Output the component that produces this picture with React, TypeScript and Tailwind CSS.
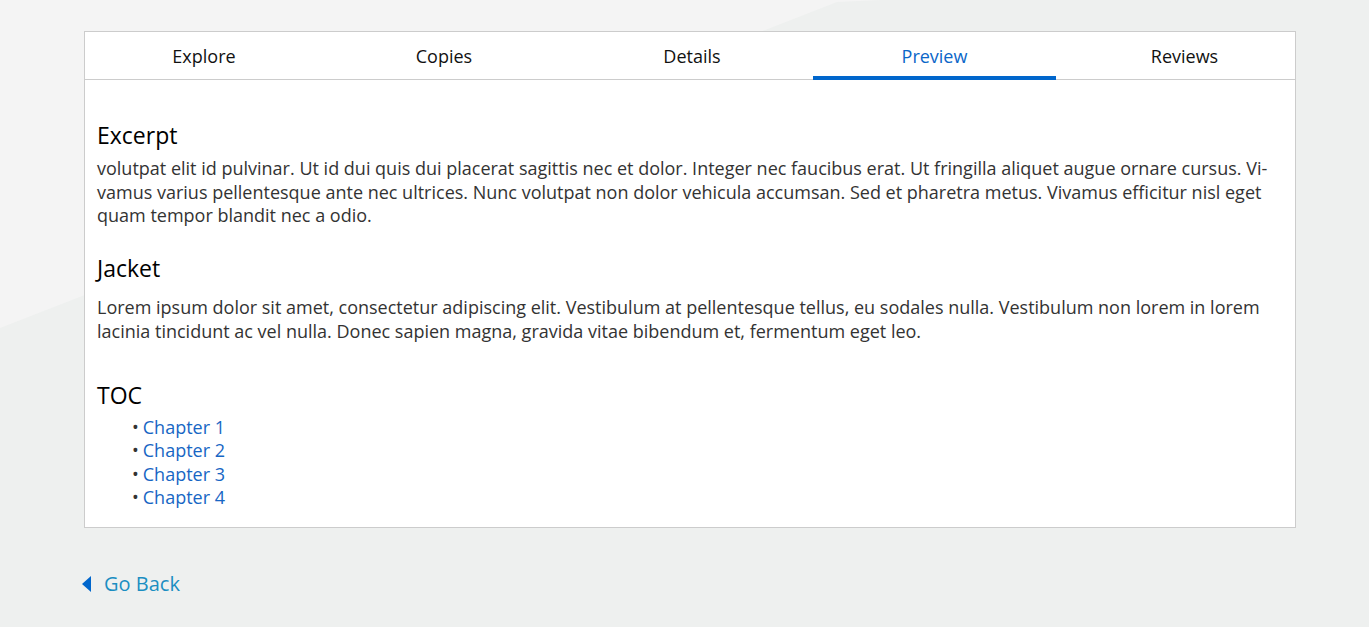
import React, { useState } from "react";

// label nudges keep each tab label where the site puts it
const tabs = [
  { label: "Explore", pad: "pr-0" },
  { label: "Copies", pad: "pr-0" },
  { label: "Details", pad: "pl-[6px]" },
  { label: "Preview", pad: "pr-0" },
  { label: "Reviews", pad: "pl-[18px]" },
];
const chapters = ["Chapter 1", "Chapter 2", "Chapter 3", "Chapter 4"];

const App: React.FC = () => {
  const [active, setActive] = useState("Preview");

  return (
    <div
      className="relative min-h-screen w-full bg-[#eef0ef] overflow-hidden"
      style={{ fontFamily: '"Open Sans", "Noto Sans", sans-serif' }}
    >
      {/* soft light wedge in the top left of the backdrop */}
      <svg className="absolute left-0 top-0 pointer-events-none" width="900" height="340">
        <polygon points="0,0 880,0 837,2 0,328" fill="#f4f4f4" />
      </svg>

      <div className="relative pt-[31px] px-[84px]">
        <div className="w-[1212px] bg-white border border-[#cccccc]">
          <div className="grid grid-cols-[238px_242px_248px_243px_1fr] border-b border-[#cccccc] h-[48px]">
            {tabs.map((t) => (
              <button
                key={t.label}
                onClick={() => setActive(t.label)}
                className={
                  t.label === active
                    ? `relative flex items-center justify-center text-[18px] text-[#0b66c8] pt-[1px] ${t.pad}`
                    : `relative flex items-center justify-center text-[18px] text-[#111111] pt-[1px] ${t.pad}`
                }
              >
                {t.label}
                {t.label === active && (
                  <span className="absolute left-0 right-0 bottom-[-1px] h-[4px] bg-[#0066cc]" />
                )}
              </button>
            ))}
          </div>

          <div className="px-[12px] pt-[40px] pb-[17px] text-[18px] leading-[23.5px] text-[#333333]">
            <h2 className="text-[23px] leading-[30px] font-medium text-black">Excerpt</h2>
            <p className="mt-[7px]">
              volutpat elit id pulvinar. Ut id dui quis dui placerat sagittis nec et dolor. Integer nec faucibus
              erat. Ut fringilla aliquet augue ornare cursus. Vi&shy;vamus varius pellentesque ante nec ultrices. Nunc
              volutpat non dolor vehicula accumsan. Sed et pharetra metus. Vivamus efficitur nisl eget quam tempor
              blandit nec a odio.
            </p>

            <h2 className="mt-[25px] text-[23px] leading-[30px] font-medium text-black">Jacket</h2>
            <p className="mt-[12px] leading-[24px]">
              Lorem ipsum dolor sit amet, consectetur adipiscing elit. Vestibulum at pellentesque tellus, eu sodales
              nulla. Vestibulum non lorem in lorem lacinia tincidunt ac vel nulla. Donec sapien magna, gravida vitae
              bibendum et, fermentum eget leo.
            </p>

            <h2 className="mt-[37px] text-[23px] leading-[30px] font-medium text-black">TOC</h2>
            <ul className="mt-[6px] pl-[35px]">
              {chapters.map((c) => (
                <li key={c} className="flex items-center">
                  <span className="text-[18px] text-[#333333] mr-[4px]">•</span>
                  <a href="#" className="text-[#1766c4]">
                    {c}
                  </a>
                </li>
              ))}
            </ul>
          </div>
        </div>

        <a href="#" className="mt-[41px] -ml-[2px] inline-flex items-center gap-[12px] text-[20px] text-[#1b8ec2]">
          <svg width="10" height="16" viewBox="0 0 10 16">
            <polygon points="9,0 9,16 0,8" fill="#0066cc" />
          </svg>
          Go Back
        </a>
      </div>
    </div>
  );
};

export default App;
